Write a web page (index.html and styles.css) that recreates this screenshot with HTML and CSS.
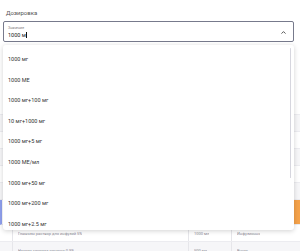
FILE: index.html
```html
<!DOCTYPE html>
<html lang="ru">
<head>
  <meta charset="UTF-8">
  <title>Дозировка</title>
  <link rel="stylesheet" href="styles.css">
</head>
<body>
  <div class="page">
    <div class="label">Дозировка</div>

    <!-- select field -->
    <div class="field">
      <div class="field-text">
        <div class="field-caption">Значение</div>
        <div class="field-value">1000 м<span class="cursor"></span></div>
      </div>
      <svg class="chevron" width="5" height="3" viewBox="0 0 5 3">
        <path d="M0.5 2.6 L2.5 0.6 L4.5 2.6" fill="none" stroke="#444" stroke-width="0.9"/>
      </svg>
    </div>

    <!-- table behind the dropdown -->
    <div class="table">
      <div class="row"><div class="c1"></div><div class="c2"></div><div class="c3"></div></div>
      <div class="row alt"><div class="c1"></div><div class="c2"></div><div class="c3"></div></div>
      <div class="row"><div class="c1"></div><div class="c2"></div><div class="c3"></div></div>
      <div class="row alt"><div class="c1"></div><div class="c2"></div><div class="c3"></div></div>
      <div class="row"><div class="c1"></div><div class="c2"></div><div class="c3"></div></div>
      <div class="row alt"><div class="c1"></div><div class="c2"></div><div class="c3"></div></div>
      <div class="row selected"><div class="c1"></div><div class="c2"></div><div class="c3"></div></div>
      <div class="row">
        <div class="c1"><span class="cell-text">Глюкозы раствор для инфузий 5%</span></div>
        <div class="c2"><span class="cell-text">1000 мл</span></div>
        <div class="c3"><span class="cell-text">Инфузионно</span></div>
      </div>
      <div class="row alt">
        <div class="c1"><span class="cell-text">Натрия хлорида раствор 0.9%</span></div>
        <div class="c2"><span class="cell-text">500 мл</span></div>
        <div class="c3"><span class="cell-text">Внутр.</span></div>
      </div>
    </div>

    <!-- dropdown list -->
    <div class="dropdown">
      <div class="option">1000 мг</div>
      <div class="option">1000 МЕ</div>
      <div class="option">1000 мг+100 мг</div>
      <div class="option">10 мг+1000 мг</div>
      <div class="option">1000 мг+5 мг</div>
      <div class="option">1000 МЕ/мл</div>
      <div class="option">1000 мг+50 мг</div>
      <div class="option">1000 мг+200 мг</div>
      <div class="option">1000 мг+2.5 мг</div>
      <div class="scrollbar"></div>
    </div>
  </div>
</body>
</html>
```

FILE: styles.css
```css
body {
  margin: 0;
  background: #ffffff;
  font-family: Roboto, "Noto Sans", sans-serif;
  color: #333;
  overflow: hidden;
}

.page {
  position: relative;
  width: 300px;
  height: 251px;
  padding-top: 9px;
  box-sizing: border-box;
}

.label {
  font-size: 6px;
  line-height: 8px;
  color: #555;
  padding-left: 6px;
  margin-bottom: 4px;
}

.field {
  margin: 0 6px 0 3px;
  height: 21px;
  box-sizing: border-box;
  border: 1px solid #777a8c;
  border-radius: 2px;
  display: flex;
  align-items: center;
  padding: 1px 7px 0 4px;
}

.field-text {
  flex: 1;
}

.field-caption {
  font-size: 3.6px;
  line-height: 5px;
  color: #777;
}

.field-value {
  font-size: 5.5px;
  line-height: 8px;
  color: #222;
}

.cursor {
  display: inline-block;
  width: 0.8px;
  height: 6px;
  background: #111;
  vertical-align: -1px;
}

.chevron {
  display: block;
}

/* table */
.table {
  margin-top: 56px;
}

.row {
  display: flex;
  height: 16px;
  border-bottom: 1px solid #ececf0;
  font-size: 4px;
  color: #8a8a94;
}

.row.alt {
  background: #f6f6f8;
}

.row.selected {
  height: 24px;
  border-left: 2px solid #8fa0ee;
  box-shadow: inset -6px 0 0 #f5a24a;
}

.row.text-row {
  height: 15px;
}

.c1, .c2, .c3 {
  display: flex;
  align-items: center;
  padding-left: 5px;
  border-left: 1px solid #e6e6ea;
}

.c1 { margin-left: 12px; width: 170px; }
.c2 { width: 37px; }
.c3 { flex: 1; }

.row.selected .c1 { margin-left: 10px; }

.cell-text {
  white-space: nowrap;
  overflow: hidden;
}

/* dropdown */
.dropdown {
  position: absolute;
  top: 45px;
  left: 3px;
  width: 291px;
  height: 185px;
  background: #fff;
  border-radius: 3px;
  box-shadow: 0 1px 5px rgba(0, 0, 0, 0.18);
  padding-top: 4px;
  box-sizing: border-box;
  overflow: hidden;
}

.option {
  height: 20.6px;
  line-height: 20.6px;
  padding-left: 5px;
  font-size: 5.5px;
  color: #333;
}

.scrollbar {
  position: absolute;
  top: 3px;
  right: 3px;
  width: 1.5px;
  height: 130px;
  background: #d6d6de;
  border-radius: 1px;
}
```
